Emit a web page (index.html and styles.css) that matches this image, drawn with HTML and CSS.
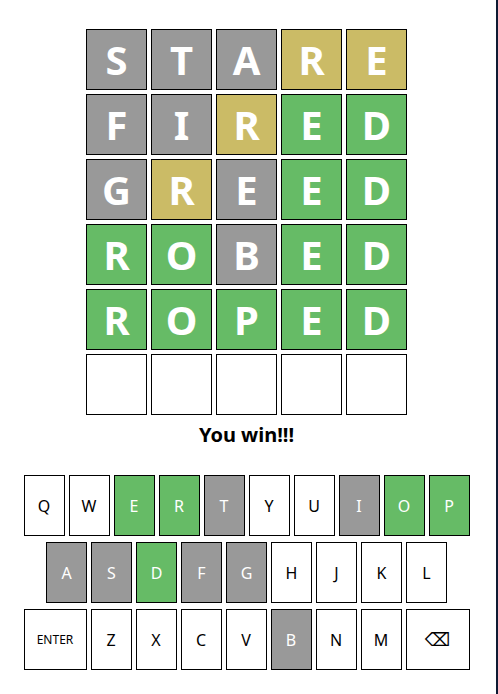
FILE: index.html
```html
<!DOCTYPE html>
<html>
<head>
<meta charset="utf-8">
<link rel="stylesheet" href="styles.css">
</head>
<body>
<div class="frame">
  <div class="board">
    <div class="tile grey">S</div><div class="tile grey">T</div><div class="tile grey">A</div><div class="tile yellow">R</div><div class="tile yellow">E</div>
    <div class="tile grey">F</div><div class="tile grey">I</div><div class="tile yellow">R</div><div class="tile green">E</div><div class="tile green">D</div>
    <div class="tile grey">G</div><div class="tile yellow">R</div><div class="tile grey">E</div><div class="tile green">E</div><div class="tile green">D</div>
    <div class="tile green">R</div><div class="tile green">O</div><div class="tile grey">B</div><div class="tile green">E</div><div class="tile green">D</div>
    <div class="tile green">R</div><div class="tile green">O</div><div class="tile green">P</div><div class="tile green">E</div><div class="tile green">D</div>
    <div class="tile"></div><div class="tile"></div><div class="tile"></div><div class="tile"></div><div class="tile"></div>
  </div>
  <div class="message">You win!!!</div>
  <div class="keyboard">
    <div class="krow">
      <div class="key">Q</div><div class="key">W</div><div class="key green">E</div><div class="key green">R</div><div class="key grey">T</div><div class="key">Y</div><div class="key">U</div><div class="key grey">I</div><div class="key green">O</div><div class="key green">P</div>
    </div>
    <div class="krow">
      <div class="key grey">A</div><div class="key grey">S</div><div class="key green">D</div><div class="key grey">F</div><div class="key grey">G</div><div class="key">H</div><div class="key">J</div><div class="key">K</div><div class="key">L</div>
    </div>
    <div class="krow">
      <div class="key enter">ENTER</div><div class="key">Z</div><div class="key">X</div><div class="key">C</div><div class="key">V</div><div class="key grey">B</div><div class="key">N</div><div class="key">M</div><div class="key back">⌫</div>
    </div>
  </div>
</div>
</body>
</html>
```

FILE: styles.css
```css
html, body {
  margin: 0;
  padding: 0;
  background: #ffffff;
}
.frame {
  width: 498px;
  min-height: 694px;
  box-sizing: border-box;
  border-right: 2px solid #0e1a33;
  padding-right: 3px;
  display: flex;
  flex-direction: column;
  align-items: center;
  font-family: "Noto Sans", "Open Sans", sans-serif;
}
.board {
  margin-top: 29px;
  display: grid;
  grid-template-columns: repeat(5, 61px);
  grid-auto-rows: 61px;
  gap: 4px;
}
.tile {
  box-sizing: border-box;
  border: 1px solid #000;
  background: #fff;
  color: #fff;
  font-weight: 700;
  font-size: 40px;
  display: flex;
  align-items: center;
  justify-content: center;
}
.grey { background: #999999; color: #fff; }
.yellow { background: #cbbb66; color: #fff; }
.green { background: #66bb66; color: #fff; }
.message {
  margin-top: 8px;
  font-weight: 700;
  font-size: 20px;
  line-height: 24px;
  color: #000;
}
.keyboard {
  margin-top: 28px;
  display: flex;
  flex-direction: column;
  align-items: center;
  gap: 6px;
}
.krow {
  display: flex;
  gap: 4px;
}
.key {
  box-sizing: border-box;
  width: 41px;
  height: 61px;
  border: 1px solid #000;
  background: #fff;
  color: #000;
  font-size: 16px;
  display: flex;
  align-items: center;
  justify-content: center;
}
.key.grey, .key.green { color: #fff; }
.key.grey { background: #999999; }
.key.green { background: #66bb66; }
.enter {
  width: 63px;
  font-size: 12px;
}
.back {
  width: 64px;
  font-family: "DejaVu Sans", sans-serif;
  font-size: 18px;
}
```
